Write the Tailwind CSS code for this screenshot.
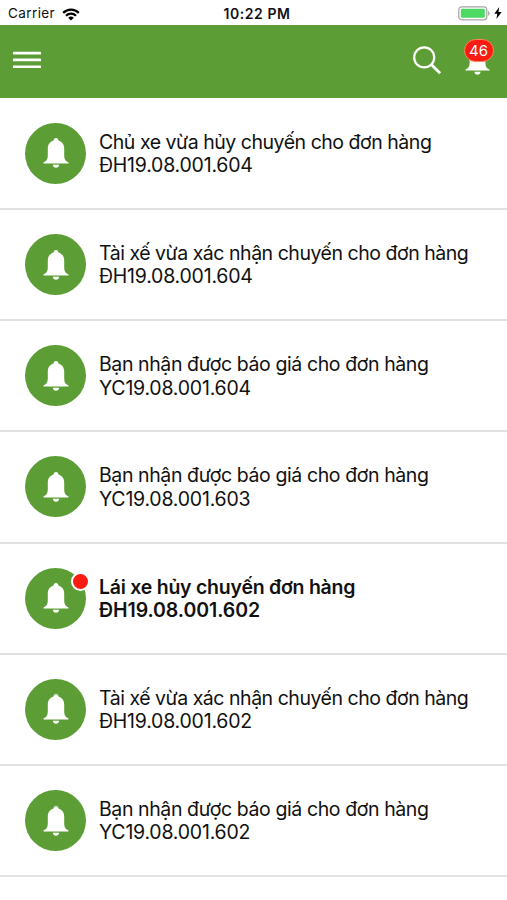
<!DOCTYPE html>
<html lang="vi">
<head>
<meta charset="utf-8">
<title>Thông báo</title>
<script src="https://cdn.jsdelivr.net/npm/@tailwindcss/browser@4"></script>
</head>
<body class="bg-white font-['Inter','Noto_Sans',sans-serif] text-[#111111]">
<svg class="hidden">
  <symbol id="bell" viewBox="0 0 26 30">
    <path d="M13 0c1.500 0 2.400 1 2.400 2.400C19.200 3.500 21.200 6.400 21.200 10.400v6.400c0 4.400 1 6.400 4.300 7.600V25.500H.5v-1.100C3.800 23.200 4.800 21.200 4.800 16.800v-6.400c0-4 2-6.900 5.800-8C10.600 1 11.500 0 13 0z"/>
    <path d="M9.800 26.700h6.400c-.2 1.900-1.500 3-3.200 3s-3-1.100-3.200-3z"/>
  </symbol>
</svg>
<div class="w-[507px] h-[900px] overflow-hidden flex flex-col">
  <div class="h-[25.300px] shrink-0 grid grid-cols-3 items-center px-2 pt-[3px]">
    <div class="flex items-center gap-[7px]">
      <span class="text-[13.500px] leading-none tracking-[0.400px]">Carrier</span>
      <svg width="18" height="13" viewBox="0 0 18 13" fill="none" stroke="#000" stroke-width="2.200"><path d="M1.200 4.900a11 11 0 0 1 15.600 0"/><path d="M4 7.800a7 7 0 0 1 10 0"/><path d="M9 12.600L6.200 9.800a4 4 0 0 1 5.600 0z" fill="#000" stroke="none"/></svg>
    </div>
    <span class="text-center text-[14px] leading-none font-semibold whitespace-nowrap tracking-[0.550px] pl-[7px]">10:22 PM</span>
    <div class="flex items-center justify-end gap-[4px] -mr-[3px] -mt-[2px]">
      <svg width="32" height="15" viewBox="0 0 32 15"><rect x=".8" y=".8" width="28" height="13" rx="3" fill="#fff" stroke="#a5a5a5" stroke-width="1.200"/><rect x="2.800" y="2.800" width="24" height="9" rx="1.200" fill="#4cd964"/><path d="M30.200 5c1.700.6 1.700 4.200 0 4.800z" fill="#999"/></svg>
      <svg width="8" height="12" viewBox="0 0 8 12"><path d="M5.200 0L.3 6.700h3L2.400 12 7.700 5H4.500z"/></svg>
    </div>
  </div>
  <header class="h-[73.200px] shrink-0 bg-[#5c9e35] flex items-center justify-between pl-[13px] pr-[16px]">
    <svg class="-mt-[4px]" width="28" height="18" viewBox="0 0 28 18" fill="#fff"><rect y=".8" width="28" height="2.700" rx=".6"/><rect y="7.600" width="28" height="2.700" rx=".6"/><rect y="14.400" width="28" height="2.700" rx=".6"/></svg>
    <div class="flex items-center gap-[23px] -mt-[4px]">
      <svg width="30" height="30" viewBox="0 0 30 30" fill="none" stroke="#fff" stroke-width="2.200"><circle cx="12.200" cy="12.400" r="10"/><path d="M19.300 19.500l8.800 8.800" stroke-width="2.800"/></svg>
      <div class="relative w-[26px] h-[28px]">
        <svg width="25" height="29" viewBox="0 0 26 30" fill="#fff"><use href="#bell"/></svg>
        <span class="absolute -left-[1.500px] -top-[7px] w-[30px] h-[23px] rounded-full bg-[#fa1c12] border border-[#f58a5a] text-white text-[15px] leading-none flex items-center justify-center">46</span>
      </div>
    </div>
  </header>
  <main id="list" class="pt-[0.300px]"></main>
</div>
<template id="row">
  <article class="h-[111.200px] border-b-2 border-[#e1e1e1] flex items-center pl-[25px]">
    <div class="relative size-[61px] shrink-0 rounded-full bg-[#5c9e35]">
      <svg class="absolute left-[17.500px] top-[15.500px]" width="26" height="30" viewBox="0 0 26 30" fill="#fff"><use href="#bell"/></svg>
      <span class="dot absolute left-[45.500px] top-[4px] size-[19px] rounded-full bg-[#fa1c12] border-2 border-white"></span>
    </div>
    <p class="ml-[13px] pt-[1.500px] text-[19.500px] leading-[23.300px] whitespace-nowrap"><span class="title"></span><br><span class="code"></span></p>
  </article>
</template>
<script>
const rows = [
  ["Chủ xe vừa hủy chuyến cho đơn hàng", "ĐH19.08.001.604"],
  ["Tài xế vừa xác nhận chuyến cho đơn hàng", "ĐH19.08.001.604"],
  ["Bạn nhận được báo giá cho đơn hàng", "YC19.08.001.604"],
  ["Bạn nhận được báo giá cho đơn hàng", "YC19.08.001.603"],
  ["Lái xe hủy chuyến đơn hàng", "ĐH19.08.001.602", true],
  ["Tài xế vừa xác nhận chuyến cho đơn hàng", "ĐH19.08.001.602"],
  ["Bạn nhận được báo giá cho đơn hàng", "YC19.08.001.602"]
];
const tpl = document.getElementById("row");
for (const [title, code, unread] of rows) {
  const n = tpl.content.cloneNode(true);
  const t = n.querySelector(".title"), c = n.querySelector(".code");
  t.textContent = title;
  c.textContent = code;
  t.classList.add(unread ? "tracking-[-0.240px]" : title.startsWith("B") ? "tracking-[-0.400px]" : "tracking-[-0.470px]");
  c.classList.add(unread ? "tracking-[-0.080px]" : "tracking-[-0.220px]");
  if (unread) n.querySelector("p").classList.add("font-semibold");
  else n.querySelector(".dot").remove();
  document.getElementById("list").append(n);
}
</script>
</body>
</html>
